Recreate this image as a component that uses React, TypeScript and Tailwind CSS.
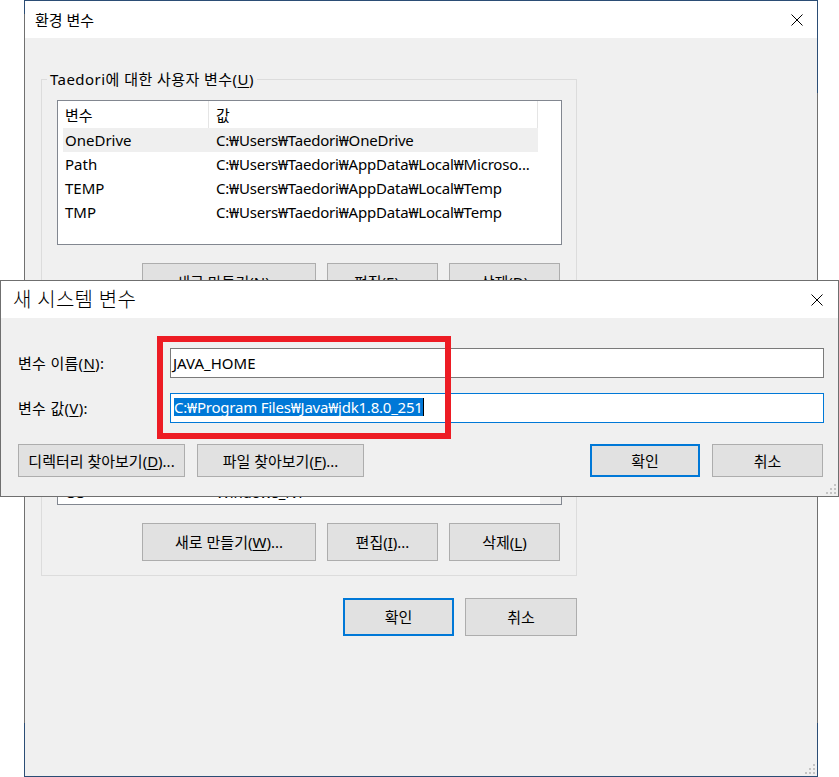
import type { ReactNode } from "react";

const userVars = [
  { name: "OneDrive", value: "C:₩Users₩Taedori₩OneDrive" },
  { name: "Path", value: "C:₩Users₩Taedori₩AppData₩Local₩Microso..." },
  { name: "TEMP", value: "C:₩Users₩Taedori₩AppData₩Local₩Temp" },
  { name: "TMP", value: "C:₩Users₩Taedori₩AppData₩Local₩Temp" },
];

const systemVars = [
  { name: "ComSpec", value: "C:₩WINDOWS₩system32₩cmd.exe" },
  { name: "DriverData", value: "C:₩Windows₩System32₩Drivers₩DriverData" },
  { name: "JAVA_HOME", value: "C:₩Program Files₩Java₩jdk1.8.0_251" },
  { name: "NUMBER_OF_PROCESSORS", value: "8" },
  { name: "OS", value: "Windows_NT" },
];

function CloseIcon() {
  return (
    <svg width="12" height="12" viewBox="0 0 12 12" className="block">
      <path d="M0.5 0.5 L11.5 11.5 M11.5 0.5 L0.5 11.5" stroke="#000" strokeWidth="1" fill="none" />
    </svg>
  );
}

function Grip() {
  return (
    <svg width="11" height="11" viewBox="0 0 11 11" className="block">
      <g fill="#c4c4c4">
        <rect x="9" y="1" width="2" height="2" />
        <rect x="5" y="5" width="2" height="2" />
        <rect x="9" y="5" width="2" height="2" />
        <rect x="1" y="9" width="2" height="2" />
        <rect x="5" y="9" width="2" height="2" />
        <rect x="9" y="9" width="2" height="2" />
      </g>
    </svg>
  );
}

function Btn({ children, w, primary }: { children: ReactNode; w: string; primary?: boolean }) {
  return (
    <div
      className={
        primary
          ? `flex h-full items-center justify-center border-2 border-[#0078d7] bg-[#e1e1e1] ${w}`
          : `flex h-full items-center justify-center border border-[#adadad] bg-[#e1e1e1] ${w}`
      }
    >
      {children}
    </div>
  );
}

function U({ children }: { children: ReactNode }) {
  return <span className="underline underline-offset-2">{children}</span>;
}

function VarList({
  rows,
  height,
  scroll,
}: {
  rows: { name: string; value: string }[];
  height: string;
  scroll?: boolean;
}) {
  return (
    <div className={`ml-[15px] mt-[11px] flex w-[505px] border border-[#828790] bg-white ${height}`}>
      <div className="flex min-w-0 flex-1 flex-col overflow-hidden">
        <div className="flex h-[27px] shrink-0 items-stretch">
          <div className="flex w-[151px] items-center border-r border-[#e5e5e5] pl-[7px]">변수</div>
          <div className="flex w-[329px] items-center border-r border-[#e5e5e5] pl-[7px]">값</div>
        </div>
        <div className={`flex min-h-0 flex-1 flex-col overflow-hidden ${scroll ? "justify-end" : ""}`}>
          {rows.map((r, i) => (
            <div
              key={r.name}
              className={`ml-[5px] grid h-[24px] w-[475px] shrink-0 grid-cols-[153px_1fr] items-center whitespace-nowrap ${
                i === 0 && !scroll ? "bg-[#efefef]" : ""
              }`}
            >
              <span className="pl-[2px]">{r.name}</span>
              <span className="overflow-hidden tracking-[-0.2px]">{r.value}</span>
            </div>
          ))}
        </div>
      </div>
      {scroll && <div className="w-[21px] bg-[#f0f0f0]" />}
    </div>
  );
}

function GroupBox({ label, children, className }: { label: ReactNode; children: ReactNode; className: string }) {
  return (
    <div className={`w-[536px] border border-[#dcdcdc] pb-[14px] ${className}`}>
      <div className="-mt-[11px] ml-[5px] w-fit bg-[#f0f0f0] px-[3px] leading-[20px] tracking-[0.45px]">{label}</div>
      {children}
    </div>
  );
}

function EnvDialog() {
  return (
    <div className="absolute left-[24px] top-0 h-[777px] w-[794px] p-px [background:linear-gradient(#2b4d75_0_14px,#707070_14px_723px,#2b4d75_723px)_left/1px_100%_no-repeat,linear-gradient(#2b4d75_0_93px,#707070_93px_723px,#2b4d75_723px)_right/1px_100%_no-repeat,#2b4d75]">
      <div className="flex h-full flex-col bg-[#f0f0f0]">
        <div className="flex h-[37px] shrink-0 items-center justify-between bg-white pl-[10px] pr-[14px]">
          <span className="leading-[20px]">환경 변수</span>
          <CloseIcon />
        </div>
        <div className="flex flex-1 flex-col px-[16px]">
          <GroupBox className="mt-[41px]" label={<>Taedori에 대한 사용자 변수(<U>U</U>)</>}>
            <VarList rows={userVars} height="h-[145px]" />
            <div className="mt-[18px] flex h-[38px] justify-end gap-[11px] pr-[16px]">
              <Btn w="w-[174px]">새로 만들기(<U>N</U>)...</Btn>
              <Btn w="w-[111px]">편집(<U>E</U>)...</Btn>
              <Btn w="w-[111px]">삭제(<U>D</U>)</Btn>
            </div>
          </GroupBox>
          <GroupBox className="mt-[14px]" label={<>시스템 변수(<U>S</U>)</>}>
            <VarList rows={systemVars} height="h-[154px]" scroll />
            <div className="mt-[18px] flex h-[38px] justify-end gap-[11px] pr-[16px]">
              <Btn w="w-[174px]">새로 만들기(<U>W</U>)...</Btn>
              <Btn w="w-[111px]">편집(<U>I</U>)...</Btn>
              <Btn w="w-[111px]">삭제(<U>L</U>)</Btn>
            </div>
          </GroupBox>
          <div className="mt-[22px] flex h-[38px] w-[536px] justify-end gap-[11px]">
            <Btn w="w-[111px]" primary>
              확인
            </Btn>
            <Btn w="w-[112px]">취소</Btn>
          </div>
          <div className="mb-[2px] -mr-[14px] mt-auto self-end">
            <Grip />
          </div>
        </div>
      </div>
    </div>
  );
}

function NewVarDialog() {
  return (
    <div className="absolute left-0 top-[280px] flex h-[217px] w-[839px] flex-col border border-[#6f6f6f] bg-[#f0f0f0]">
      <div className="flex h-[37px] shrink-0 items-center justify-between bg-white pl-[12px] pr-[15px]">
        <span className="text-[20px] font-light leading-[24px] tracking-[0.3px]">새 시스템 변수</span>
        <CloseIcon />
      </div>
      <div className="flex flex-1 flex-col pl-[17px] pr-[14px] pt-[30px]">
        <div className="flex h-[30px] items-center">
          <span className="w-[152px] tracking-[0.3px]">
            변수 이름(<U>N</U>):
          </span>
          <div className="flex h-full flex-1 items-center border border-[#7a7a7a] bg-white pl-[2px]">JAVA_HOME</div>
        </div>
        <div className="mt-[15px] flex h-[30px] items-center">
          <span className="w-[152px] tracking-[0.3px]">
            변수 값(<U>V</U>):
          </span>
          <div className="flex h-full flex-1 items-center border border-[#0078d7] bg-white pb-[3px] pl-[3px]">
            <span className="bg-[#0078d7] leading-[18px] tracking-[-0.22px] text-white">
              C:₩Program Files₩Java₩jdk1.8.0_251
            </span>
            <span className="h-[18px] w-px bg-black" />
          </div>
        </div>
        <div className="mt-[21px] flex h-[33px] gap-[12px] pr-px">
          <Btn w="w-[167px]">
            디렉터리 찾아보기(<U>D</U>)...
          </Btn>
          <Btn w="w-[167px]">
            파일 찾아보기(<U>F</U>)...
          </Btn>
          <div className="flex-1" />
          <Btn w="w-[110px]" primary>
            확인
          </Btn>
          <Btn w="w-[111px]">취소</Btn>
        </div>
        <div className="mb-[2px] -mr-[12px] mt-auto self-end">
          <Grip />
        </div>
      </div>
      <div className="absolute left-[156px] top-[55px] h-[103px] w-[294px] border-[6px] border-[#ed1c24]" />
    </div>
  );
}

export default function App() {
  return (
    <div className="relative h-[777px] w-[839px] overflow-hidden bg-white font-['Noto_Sans','Noto_Sans_CJK_KR',sans-serif] text-[15px] leading-[20px] text-black">
      <EnvDialog />
      <NewVarDialog />
    </div>
  );
}
